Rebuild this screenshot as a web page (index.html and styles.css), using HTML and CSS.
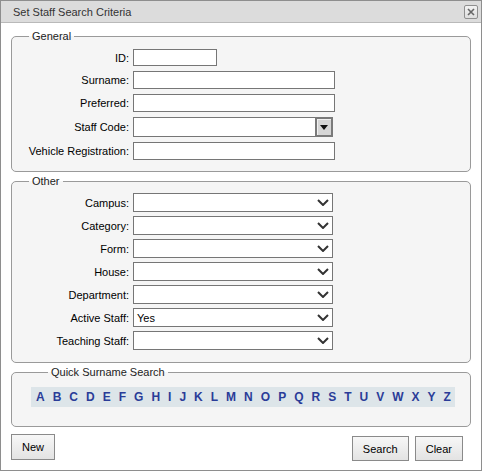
FILE: index.html
```html
<!DOCTYPE html>
<html>
<head>
<meta charset="utf-8">
<link rel="stylesheet" href="styles.css">
</head>
<body>
<div class="dialog">
  <div class="titlebar">
    <span class="title">Set Staff Search Criteria</span>
    <span class="close"><svg width="8" height="8" viewBox="0 0 8 8"><path d="M1 1L7 7M7 1L1 7" stroke="#666" stroke-width="1.6" fill="none"/></svg></span>
  </div>
  <div class="content">
    <fieldset class="group general">
      <legend>General</legend>
      <div class="form">
        <label>ID:</label><input class="inp short" type="text">
        <label>Surname:</label><input class="inp" type="text">
        <label>Preferred:</label><input class="inp" type="text">
        <label>Staff Code:</label>
        <div class="combo"><input class="combo-input" type="text"><span class="combo-btn"><svg width="8" height="5" viewBox="0 0 8 5"><path d="M0 0H8L4 5Z" fill="#111"/></svg></span></div>
        <label>Vehicle Registration:</label><input class="inp" type="text">
      </div>
    </fieldset>
    <fieldset class="group other">
      <legend>Other</legend>
      <div class="form selects">
        <label>Campus:</label><div class="sel"><span></span><svg class="chev" width="12" height="7" viewBox="0 0 12 7"><path d="M1 1L6 6L11 1" stroke="#333" stroke-width="2" fill="none"/></svg></div>
        <label>Category:</label><div class="sel"><span></span><svg class="chev" width="12" height="7" viewBox="0 0 12 7"><path d="M1 1L6 6L11 1" stroke="#333" stroke-width="2" fill="none"/></svg></div>
        <label>Form:</label><div class="sel"><span></span><svg class="chev" width="12" height="7" viewBox="0 0 12 7"><path d="M1 1L6 6L11 1" stroke="#333" stroke-width="2" fill="none"/></svg></div>
        <label>House:</label><div class="sel"><span></span><svg class="chev" width="12" height="7" viewBox="0 0 12 7"><path d="M1 1L6 6L11 1" stroke="#333" stroke-width="2" fill="none"/></svg></div>
        <label>Department:</label><div class="sel"><span></span><svg class="chev" width="12" height="7" viewBox="0 0 12 7"><path d="M1 1L6 6L11 1" stroke="#333" stroke-width="2" fill="none"/></svg></div>
        <label>Active Staff:</label><div class="sel"><span>Yes</span><svg class="chev" width="12" height="7" viewBox="0 0 12 7"><path d="M1 1L6 6L11 1" stroke="#333" stroke-width="2" fill="none"/></svg></div>
        <label>Teaching Staff:</label><div class="sel"><span></span><svg class="chev" width="12" height="7" viewBox="0 0 12 7"><path d="M1 1L6 6L11 1" stroke="#333" stroke-width="2" fill="none"/></svg></div>
      </div>
    </fieldset>
    <fieldset class="group quick">
      <legend>Quick Surname Search</legend>
      <div class="letters">
        <a>A</a><a>B</a><a>C</a><a>D</a><a>E</a><a>F</a><a>G</a><a>H</a><a>I</a><a>J</a><a>K</a><a>L</a><a>M</a><a>N</a><a>O</a><a>P</a><a>Q</a><a>R</a><a>S</a><a>T</a><a>U</a><a>V</a><a>W</a><a>X</a><a>Y</a><a>Z</a>
      </div>
    </fieldset>
    <div class="buttons">
      <button class="btn new">New</button>
      <div class="right">
        <button class="btn">Search</button>
        <button class="btn">Clear</button>
      </div>
    </div>
  </div>
</div>
</body>
</html>
```
FILE: styles.css
```css
html, body {
  margin: 0;
  padding: 0;
  background: #fff;
}
.dialog {
  width: 482px;
  height: 471px;
  box-sizing: border-box;
  border: 1px solid #8e8e8e;
  background: #fff;
  font-family: "Liberation Sans", Arial, sans-serif;
  font-size: 11px;
  color: #000;
}
.titlebar {
  height: 21px;
  border-bottom: 1px solid #b9b9b9;
  background: #dcdcdc;
  display: flex;
  align-items: center;
  justify-content: space-between;
  padding: 0 3px 0 12px;
}
.title {
  color: #333;
  font-size: 11px;
}
.close {
  width: 12px;
  height: 12px;
  border: 1px solid #8f8f8f;
  border-radius: 2px;
  background: linear-gradient(#f2f2f2, #dedede);
  display: flex;
  align-items: center;
  justify-content: center;
}
.content {
  padding: 0 10px;
}
.group {
  margin: 3px 0 0 0;
  padding: 0;
  border: 1px solid #9a9a9a;
  border-radius: 5px;
  background: #f5f5f5;
  min-width: 0;
}
.group legend {
  margin-left: 17px;
  padding: 0 3px;
  line-height: 13px;
  font-size: 11px;
  color: #222;
}
.general {
  margin-top: 7px;
}
.form {
  display: grid;
  grid-template-columns: 117px auto;
  column-gap: 4px;
  row-gap: 5px;
  align-items: center;
  justify-items: start;
  padding: 6px 0 11px 0;
}
.form label {
  justify-self: end;
  white-space: nowrap;
}
.inp {
  box-sizing: border-box;
  width: 202px;
  height: 18px;
  margin: 0;
  padding: 0 3px;
  border: 1px solid #767676;
  background: #fff;
  font: inherit;
}
.inp.short {
  width: 84px;
  height: 17px;
}
.combo {
  display: flex;
  width: 200px;
  height: 20px;
  box-sizing: border-box;
}
.combo-input {
  box-sizing: border-box;
  flex: 1;
  min-width: 0;
  height: 20px;
  margin: 0;
  border: 1px solid #767676;
  border-right: none;
  background: #fff;
  font: inherit;
}
.combo-btn {
  box-sizing: border-box;
  width: 18px;
  height: 20px;
  border: 2px solid #7a7a7a;
  box-shadow: inset 1px 1px 0 #f0f0f0;
  background: #d6d6d6;
  display: flex;
  align-items: center;
  justify-content: center;
}
.selects {
  row-gap: 4px;
  padding: 5px 0 12px 0;
}
.sel {
  box-sizing: border-box;
  width: 200px;
  height: 19px;
  border: 1px solid #767676;
  background: #fff;
  display: flex;
  align-items: center;
  justify-content: space-between;
  padding: 0 3px 0 3px;
}
.sel span {
  font-size: 11px;
}
.chev {
  display: block;
}
.quick {
  padding: 8px 0 19px 19px;
}
.letters {
  width: 424px;
  height: 20px;
  box-sizing: border-box;
  background: #dde5e9;
  display: flex;
  align-items: center;
  justify-content: space-between;
  padding: 0 4px 0 5px;
}
.letters a {
  font-size: 12px;
  font-weight: bold;
  color: #2a3c98;
}
.buttons {
  display: flex;
  justify-content: space-between;
  align-items: flex-start;
  margin-top: 7px;
}
.right {
  display: flex;
  gap: 6px;
  margin-top: 2px;
  margin-right: 8px;
}
.btn {
  box-sizing: border-box;
  height: 25px;
  padding: 0 10px;
  margin: 0;
  border: 1px solid #8a8a8a;
  background: linear-gradient(#f7f7f7, #e3e3e3);
  font-family: "Liberation Sans", Arial, sans-serif;
  font-size: 11px;
  color: #000;
}
.btn.new {
  height: 26px;
}
```
